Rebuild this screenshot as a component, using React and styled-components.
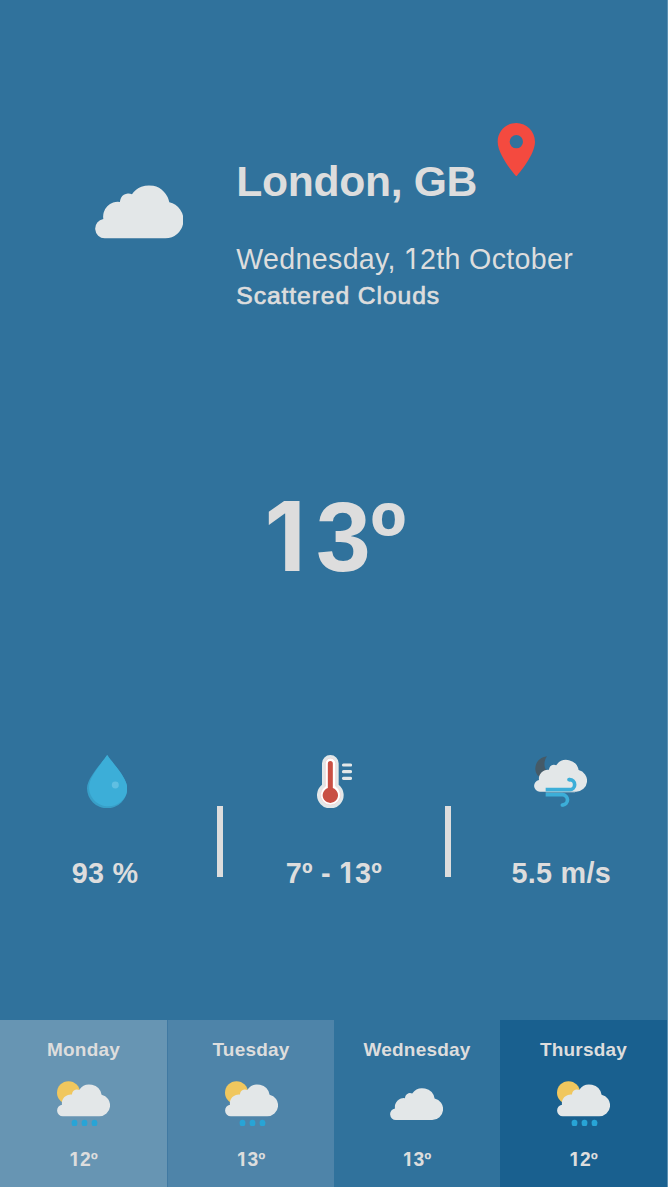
import React from "react";
import styled, { createGlobalStyle } from "styled-components";

const GlobalStyle = createGlobalStyle`
  * { box-sizing: border-box; }
  body {
    margin: 0;
    background: #ffffff;
    font-family: "Liberation Sans", Arial, sans-serif;
    color: #dddddd;
  }
`;

const Screen = styled.main`
  display: flex;
  flex-direction: column;
  width: 667px;
  height: 1187px;
  overflow: hidden;
  background: #30729c;
  box-shadow: 1px 0 0 #5d91b2;
`;

const Header = styled.header`
  display: flex;
  height: 380px;
  padding: 123px 0 0 94.7px;
`;

const Condition = styled.div`
  width: 141.6px;
  padding-top: 62.2px;
`;

const Place = styled.div`
  display: flex;
  gap: 20px;
  height: 118px;
`;

const City = styled.h1`
  margin: 33px 0 0;
  width: 241.2px;
  font-size: 42.67px;
  line-height: 50px;
  letter-spacing: -0.33px;
  white-space: nowrap;
`;

const DateLine = styled.p`
  margin: 0;
  font-size: 28.6px;
  line-height: 36px;
  letter-spacing: 0.33px;
  white-space: nowrap;
`;

const Description = styled.p`
  margin: 1px 0 0;
  font-size: 24.7px;
  line-height: 36px;
  letter-spacing: 0.9px;
  -webkit-text-stroke: 0.7px #dddddd;
`;

/* A plain, footless "1" set on the same advance as the other figures. */
const One = styled.span`
  display: inline-block;
  width: 0.573em;
  margin: 0 0.04em 0 -0.04em;
  font-size: 0.97em;
  line-height: 1;
  text-align: center;
  font-family: Inter, "Liberation Sans", sans-serif;
`;

const Temperature = styled.div`
  height: 375px;
  padding-top: 97px;
  text-align: center;
  font-size: 98.5px;
  line-height: 120px;
  font-weight: bold;
  letter-spacing: -0.6px;
`;

const Stats = styled.section`
  display: grid;
  grid-template-columns: 217.3px 5.3px 222.7px 5.3px 1fr;
  height: 265px;
`;

const Stat = styled.div`
  display: flex;
  flex-direction: column;
  align-items: center;
`;

const StatIcon = styled.div`
  margin-left: ${(p) => p.$offset}px;
`;

const StatValue = styled.span`
  margin-top: 47px;
  margin-left: ${(p) => p.$offset || 0}px;
  font-size: 28.8px;
  line-height: 36px;
  font-weight: bold;
  white-space: nowrap;
  letter-spacing: 0.25px;
`;

const Divider = styled.div`
  margin-top: 51px;
  height: 71px;
  background: #dddddd;
`;

const Forecast = styled.section`
  display: grid;
  grid-template-columns: 167px 167px 166px 167px;
  height: 167px;
`;

const Day = styled.article`
  display: flex;
  flex-direction: column;
  align-items: center;
  padding-top: 17px;
  background: ${(p) => p.$color};
  border-left: ${(p) => (p.$edge ? "1px solid #4079a2" : "none")};
`;

const DayName = styled.h2`
  margin: 0;
  font-size: 19px;
  line-height: 25px;
  letter-spacing: 0.2px;
`;

const DayIcon = styled.div`
  display: flex;
  justify-content: center;
  height: 69px;
  padding: ${(p) => (p.$cloudy ? "25.7px 1px 0 0" : "18.7px 0 0")};
`;

const DayTemp = styled.span`
  margin-top: 16px;
  font-size: 19.3px;
  line-height: 25px;
  font-weight: bold;
`;

const Icon = styled.svg`
  display: block;
  flex: none;
`;

const CLOUD =
  "M73 205A29.200 29.200 0 0 1 69 147A44 44 0 0 1 119 96A25 25 0 0 1 155 73A62 62 0 0 1 267 97A54.700 54.700 0 0 1 255 205Z";

function Figures({ children }) {
  return children
    .split(/(1)/)
    .map((part, i) => (part === "1" ? <One key={i}>1</One> : part));
}

function Cloud({ width, height }) {
  return (
    <Icon width={width} height={height} viewBox="44 45 265 160">
      <path d={CLOUD} fill="#e3e7e8" />
    </Icon>
  );
}

function SunRain() {
  return (
    <Icon width="53" height="45.33" viewBox="0 0 159 136">
      <circle cx="34.5" cy="35" r="34.5" fill="#f0c75e" />
      <path d={CLOUD} fill="#e3e7e8" transform="translate(0 10) scale(.6) translate(-44 -45)" />
      {[44, 74, 104].map((x) => (
        <rect key={x} x={x} y="116" width="17" height="20" rx="7.5" fill="#28a4d6" />
      ))}
    </Icon>
  );
}

function Pin() {
  return (
    <Icon width="38" height="53.33" viewBox="4.75 2 14.25 20">
      <path
        fill="#f44a3f"
        d="M12 2C8.13 2 5 5.13 5 9c0 5.25 7 13 7 13s7-7.75 7-13c0-3.87-3.13-7-7-7zm0 9.5a2.5 2.5 0 0 1 0-5 2.5 2.5 0 0 1 0 5z"
      />
    </Icon>
  );
}

function Drop() {
  return (
    <Icon width="40.3" height="53.33" viewBox="80 44 121 160">
      <path d="M140.500 44C128 64 80 112 80 144A60.500 60 0 0 0 201 144C201 112 153 64 140.500 44Z" fill="#389fc8" />
      <path d="M140.500 44C128 64 86 110 86 140C86 172 112 198 144 198C176 198 201 174 201 144C201 112 153 64 140.500 44Z" fill="#3caed8" />
      <circle cx="165" cy="134" r="10.500" fill="#60bfe2" />
    </Icon>
  );
}

function Thermometer() {
  return (
    <Icon width="35" height="53.33" viewBox="126 44 105 160">
      <path d="M141 69A25 25 0 0 1 191 69V133A40 40 0 1 1 141 133Z" fill="#e3e7e8" />
      <path d="M151 69A15.500 15.500 0 0 1 182 69V138A30 30 0 1 1 151 138Z" fill="#fff" stroke="#f1cccb" strokeWidth="2" />
      <path d="M158.500 70A7.500 8 0 0 1 173.500 70V143A23 23 0 1 1 158.500 143Z" fill="#c94f44" />
      <path d="M205.500 74H226.500M205.500 94H226.500M205.500 114H226.500" stroke="#e3e7e8" strokeWidth="9.500" strokeLinecap="round" />
    </Icon>
  );
}

function Wind() {
  return (
    <Icon width="53" height="53.33" viewBox="27 30 159 160">
      <path d="M66 34C24 40 22 88 48 98L78 86C58 80 52 54 66 34Z" fill="#455a67" />
      <path d={CLOUD} fill="#e3e7e8" transform="translate(27 44) scale(.6) translate(-44 -45)" />
      <g fill="none" stroke="#3caed8" strokeWidth="11">
        <path d="M62 134H134A15 15 0 0 0 134 104H132" />
        <path d="M62 149H112A15.500 15.500 0 0 1 112 180" />
      </g>
      <circle cx="132" cy="104" r="5.500" fill="#3caed8" />
      <circle cx="112" cy="180" r="5.500" fill="#3caed8" />
      <path d="M62 141.500H150" stroke="#e3e7e8" strokeWidth="2" opacity=".6" />
    </Icon>
  );
}

const STATS = [
  { Art: Drop, value: "93 %", iconOffset: -3, valueOffset: -7 },
  { Art: Thermometer, value: "7º - 13º", iconOffset: 2, valueOffset: 0 },
  { Art: Wind, value: "5.5 m/s", iconOffset: 4, valueOffset: 5 },
];

const DAYS = [
  { name: "Monday", temp: "12º", color: "#6795b3" },
  { name: "Tuesday", temp: "13º", color: "#4e84a9", edge: true },
  { name: "Wednesday", temp: "13º", color: "#30729c", cloudy: true },
  { name: "Thursday", temp: "12º", color: "#19608f" },
];

export default function App() {
  return (
    <>
      <GlobalStyle />
      <Screen>
        <Header>
          <Condition>
            <Cloud width="88.33" height="53.33" />
          </Condition>
          <div>
            <Place>
              <City>London, GB</City>
              <Pin />
            </Place>
            <DateLine>
              <Figures>Wednesday, 12th October</Figures>
            </DateLine>
            <Description>Scattered Clouds</Description>
          </div>
        </Header>
        <Temperature>
          <Figures>13º</Figures>
        </Temperature>
        <Stats>
          {STATS.map(({ Art, value, iconOffset, valueOffset }, i) => (
            <React.Fragment key={value}>
              {i > 0 && <Divider />}
              <Stat>
                <StatIcon $offset={iconOffset}>
                  <Art />
                </StatIcon>
                <StatValue $offset={valueOffset}>
                  <Figures>{value}</Figures>
                </StatValue>
              </Stat>
            </React.Fragment>
          ))}
        </Stats>
        <Forecast>
          {DAYS.map((d) => (
            <Day key={d.name} $color={d.color} $edge={d.edge}>
              <DayName>{d.name}</DayName>
              <DayIcon $cloudy={d.cloudy}>
                {d.cloudy ? <Cloud width="53" height="32" /> : <SunRain />}
              </DayIcon>
              <DayTemp>
                <Figures>{d.temp}</Figures>
              </DayTemp>
            </Day>
          ))}
        </Forecast>
      </Screen>
    </>
  );
}
